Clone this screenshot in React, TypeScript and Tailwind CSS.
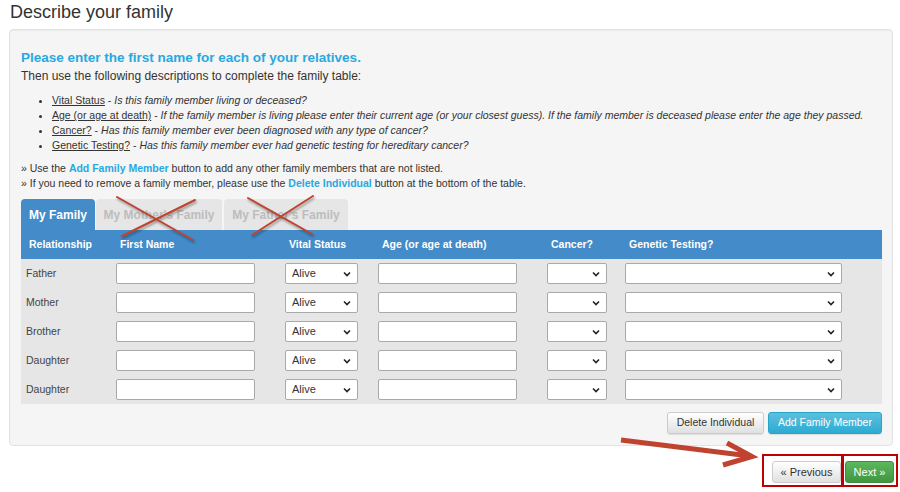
import React from "react";

const rows = ["Father", "Mother", "Brother", "Daughter", "Daughter"];

const descriptions = [
  { term: "Vital Status", text: "Is this family member living or deceased?" },
  {
    term: "Age (or age at death)",
    text: "If the family member is living please enter their current age (or your closest guess). If the family member is deceased please enter the age they passed.",
  },
  { term: "Cancer?", text: "Has this family member ever been diagnosed with any type of cancer?" },
  { term: "Genetic Testing?", text: "Has this family member ever had genetic testing for hereditary cancer?" },
];

function Chevron() {
  return (
    <svg width="8" height="6" viewBox="0 0 8 6" className="pointer-events-none absolute right-[7px] top-1/2 -translate-y-1/2">
      <path d="M1 1.5 L4 4.5 L7 1.5" fill="none" stroke="#222" strokeWidth="1.6" />
    </svg>
  );
}

function Select({ width, value }: { width: string; value?: string }) {
  return (
    <div className={`relative h-[21px] ${width}`}>
      <select
        defaultValue={value ?? ""}
        className="block h-full w-full appearance-none rounded-[2px] border border-[#a9a9a9] bg-white pl-[6px] text-[11px] text-[#333] outline-none"
      >
        <option value=""></option>
        {value && <option value={value}>{value}</option>}
      </select>
      <Chevron />
    </div>
  );
}

function TextBox({ width }: { width: string }) {
  return <input type="text" className={`block h-[21px] ${width} rounded-[2px] border border-[#a9a9a9] bg-white outline-none`} />;
}

export default function App() {
  return (
    <div className="relative h-[492px] w-[900px] overflow-hidden bg-white font-['Liberation_Sans',Arial,sans-serif] text-[#333]">
      {/* Page title */}
      <h1 className="pl-[10px] text-[18px] leading-[24px] text-[#333]">Describe your family</h1>

      {/* Well panel */}
      <div className="ml-[9px] mt-[5px] h-[417px] w-[884px] rounded-[4px] border border-[#e3e3e3] bg-[#f5f5f5] pl-[11px] pr-[10px] pt-[18px] shadow-[inset_0_1px_1px_rgba(0,0,0,0.05)]">
        <h2 className="text-[13.5px] font-bold leading-[20px] text-[#29a8e0]">
          Please enter the first name for each of your relatives.
        </h2>
        <p className="text-[12px] leading-[16px] text-[#333]">Then use the following descriptions to complete the family table:</p>

        <ul className="mt-[9px] list-disc pl-[31px] text-[10.5px] leading-[15px] text-[#333]">
          {descriptions.map((d) => (
            <li key={d.term} className="whitespace-nowrap">
              <span className="underline">{d.term}</span> - <i>{d.text}</i>
            </li>
          ))}
        </ul>

        <div className="mt-[8px] text-[10.5px] leading-[15px] text-[#333]">
          <p>
            » Use the <b className="text-[#29a8e0]">Add Family Member</b> button to add any other family members that are not listed.
          </p>
          <p>
            » If you need to remove a family member, please use the <b className="text-[#29a8e0]">Delete Individual</b> button at the bottom of the table.
          </p>
        </div>

        {/* Tabs */}
        <div className="relative mt-[8px] flex h-[31px] items-end gap-[1px]">
          <div className="flex h-[31px] w-[74px] items-center justify-center rounded-t-[4px] bg-[#438bc9] text-[12px] font-bold text-white">
            My Family
          </div>
          <div className="flex h-[31px] w-[126px] items-center justify-center rounded-t-[4px] bg-[#e6e6e6] text-[12px] font-bold text-[#bdbdbd]">
            My Mother's Family
          </div>
          <div className="ml-[1px] flex h-[31px] w-[124px] items-center justify-center rounded-t-[4px] bg-[#e6e6e6] text-[12px] font-bold text-[#bdbdbd]">
            My Father's Family
          </div>
          <svg className="pointer-events-none absolute left-[-12px] top-[-4px]" width="340" height="50" viewBox="0 0 340 50">
            <g stroke="#c0432f" strokeWidth="2" strokeLinecap="round" style={{ filter: "drop-shadow(1px 2px 1px rgba(0,0,0,0.35))" }}>
              <line x1="108" y1="2" x2="184" y2="45" />
              <line x1="113" y1="41" x2="186" y2="5" />
              <line x1="239" y1="3" x2="303" y2="39" />
              <line x1="243" y1="40" x2="304" y2="1" />
            </g>
          </svg>
        </div>

        {/* Table */}
        <div className="grid grid-cols-[91px_169px_93px_169px_78px_1fr]">
          {["Relationship", "First Name", "Vital Status", "Age (or age at death)", "Cancer?", "Genetic Testing?"].map((h) => (
            <div key={h} className="flex h-[29px] items-center bg-[#438bc9] pl-[8px] text-[10.5px] font-bold text-white">
              {h}
            </div>
          ))}
          {rows.map((r, i) => (
            <React.Fragment key={i}>
              <div className="flex h-[29px] items-center bg-[#e6e6e6] pl-[5px] text-[10.5px] text-[#444]">{r}</div>
              <div className="flex items-center bg-[#e6e6e6] pl-[4px]">
                <TextBox width="w-[139px]" />
              </div>
              <div className="flex items-center bg-[#e6e6e6] pl-[4px]">
                <Select width="w-[73px]" value="Alive" />
              </div>
              <div className="flex items-center bg-[#e6e6e6] pl-[4px]">
                <TextBox width="w-[139px]" />
              </div>
              <div className="flex items-center bg-[#e6e6e6] pl-[4px]">
                <Select width="w-[60px]" />
              </div>
              <div className="flex items-center bg-[#e6e6e6] pl-[4px]">
                <Select width="w-[217px]" />
              </div>
            </React.Fragment>
          ))}
        </div>

        <div className="mt-[8px] flex justify-end gap-[4px]">
          <button className="h-[22px] w-[97px] rounded-[3px] border border-[#ccc] bg-gradient-to-b from-white to-[#e0e0e0] text-[10.5px] text-[#333] shadow-[0_1px_1px_rgba(0,0,0,0.1)]">
            Delete Individual
          </button>
          <button className="h-[22px] w-[114px] rounded-[3px] border border-[#28a4c9] bg-gradient-to-b from-[#5bc0de] to-[#2aabd2] text-[10.5px] text-white shadow-[0_1px_1px_rgba(0,0,0,0.1)]">
            Add Family Member
          </button>
        </div>
      </div>

      {/* Navigation */}
      <div className="mr-[6px] mt-[15px] flex justify-end gap-[4px]">
        <button className="h-[22px] w-[69px] rounded-[3px] border border-[#ccc] bg-gradient-to-b from-white to-[#e0e0e0] text-[11px] text-[#333]">
          « Previous
        </button>
        <button className="h-[22px] w-[49px] rounded-[3px] border border-[#3e8f3e] bg-gradient-to-b from-[#5cb85c] to-[#419641] text-[11px] text-white">
          Next »
        </button>
      </div>

      {/* Annotation: red boxes and arrow */}
      <div className="pointer-events-none absolute left-[762px] top-[454px] h-[33px] w-[81px] border-2 border-[#c00000]" />
      <div className="pointer-events-none absolute left-[842px] top-[454px] h-[33px] w-[56px] border-2 border-[#c00000]" />
      <svg className="pointer-events-none absolute left-[615px] top-[435px]" width="150" height="35" viewBox="0 0 150 35">
        <g stroke="#c0432f" strokeWidth="5" fill="none" strokeLinecap="butt" strokeLinejoin="miter">
          <line x1="6" y1="5" x2="135" y2="21" />
          <polyline points="112,8 137,21.5 108,30" />
        </g>
      </svg>
    </div>
  );
}
